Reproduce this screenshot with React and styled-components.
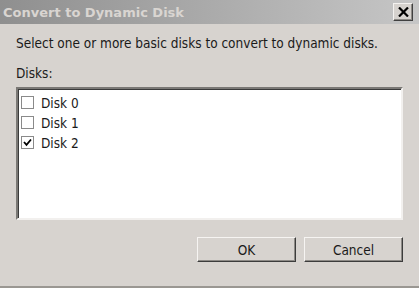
import React from "react";
import styled, { createGlobalStyle } from "styled-components";

const Global = createGlobalStyle`
  html, body { margin: 0; padding: 0; background: #d7d3cf; }
  body { width: 419px; height: 288px; overflow: hidden; }
`;

const Dialog = styled.div`
  width: 419px;
  height: 288px;
  display: flex;
  flex-direction: column;
  background: #d7d3cf;
  font-family: "DejaVu Sans Condensed", "DejaVu Sans", sans-serif;
  color: #1a1a1a;
  box-sizing: border-box;
  border-bottom: 2px solid #9a9792;
`;

const TitleBar = styled.div`
  height: 24px;
  flex: none;
  display: flex;
  align-items: center;
  justify-content: space-between;
  padding: 0 6px 0 3px;
  background: linear-gradient(to right, #8f8f8f, #c6c6c6);
`;

const Title = styled.span`
  font-family: "DejaVu Sans", sans-serif;
  font-weight: bold;
  font-size: 13px;
  color: #d9d5d1;
`;

const CloseButton = styled.div`
  width: 20px;
  height: 18px;
  box-sizing: border-box;
  background: #d6d2ce;
  border: 1px solid;
  border-color: #f4f2f0 #404040 #404040 #f4f2f0;
  box-shadow: inset -1px -1px 0 #8d8a86;
  display: flex;
  align-items: center;
  justify-content: center;
`;

const Body = styled.div`
  flex: 1;
  display: flex;
  flex-direction: column;
  padding: 11px 16px 0 16px;
`;

const Label = styled.div`
  font-size: 13.5px;
  line-height: 16px;
  margin-bottom: ${(p) => p.mb || 0}px;
`;

const ListBox = styled.div`
  height: 133px;
  width: 387px;
  box-sizing: border-box;
  background: #fff;
  border: 2px solid;
  border-color: #7a7875 #f2f0ee #f2f0ee #7a7875;
  box-shadow: inset 1px 1px 0 #3a3a3a;
  padding: 7px 0 0 3px;
  display: flex;
  flex-direction: column;
  gap: 7px;
`;

const Item = styled.div`
  display: flex;
  align-items: center;
  gap: 7px;
  font-size: 13.5px;
  height: 13px;
`;

const Box = styled.span`
  width: 13px;
  height: 13px;
  box-sizing: border-box;
  border: 1px solid #8a8a8a;
  background: #fff;
  display: flex;
  align-items: center;
  justify-content: center;
`;

const Buttons = styled.div`
  display: flex;
  justify-content: flex-end;
  gap: 8px;
  margin-top: 17px;
`;

const Button = styled.div`
  width: 99px;
  height: 25px;
  box-sizing: border-box;
  border: 1px solid;
  border-color: #f6f4f2 #3c3c3c #3c3c3c #f6f4f2;
  box-shadow: inset -1px -1px 0 #8d8a86;
  display: flex;
  align-items: center;
  justify-content: center;
  font-size: 13.5px;
`;

const disks = [
  { name: "Disk 0", checked: false },
  { name: "Disk 1", checked: false },
  { name: "Disk 2", checked: true },
];

export default function App() {
  return (
    <>
      <Global />
      <Dialog>
        <TitleBar>
          <Title>Convert to Dynamic Disk</Title>
          <CloseButton>
            <svg width="11" height="10" viewBox="0 0 11 10">
              <path d="M1 0.5 L10 9.5 M10 0.5 L1 9.5" stroke="#000" strokeWidth="2.2" />
            </svg>
          </CloseButton>
        </TitleBar>
        <Body>
          <Label mb={14}>Select one or more basic disks to convert to dynamic disks.</Label>
          <Label mb={6}>Disks:</Label>
          <ListBox>
            {disks.map((d) => (
              <Item key={d.name}>
                <Box>
                  {d.checked && (
                    <svg width="9" height="9" viewBox="0 0 9 9">
                      <path d="M1 4 L3.5 6.8 L8 1.5" stroke="#000" strokeWidth="1.8" fill="none" />
                    </svg>
                  )}
                </Box>
                {d.name}
              </Item>
            ))}
          </ListBox>
          <Buttons>
            <Button>OK</Button>
            <Button>Cancel</Button>
          </Buttons>
        </Body>
      </Dialog>
    </>
  );
}
